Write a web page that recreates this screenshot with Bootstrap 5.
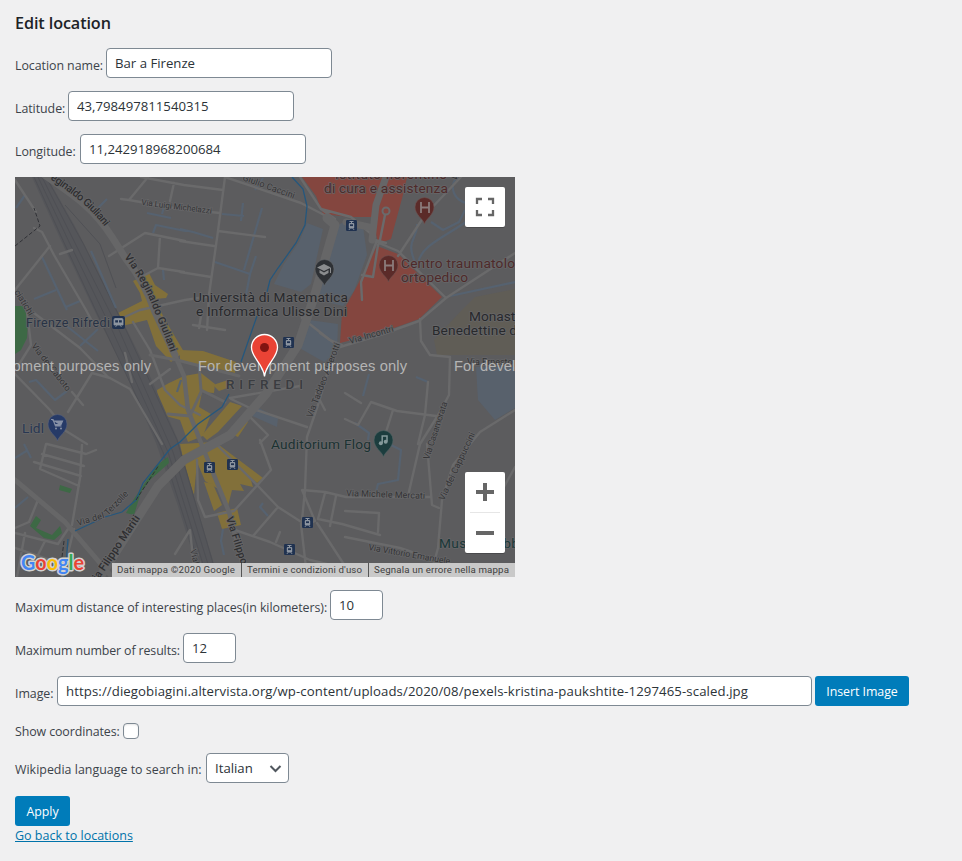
<!DOCTYPE html>
<html lang="en">
<head>
<meta charset="utf-8">
<meta name="viewport" content="width=device-width, initial-scale=1">
<title>Edit location</title>
<link href="https://cdn.jsdelivr.net/npm/bootstrap@5.3.0/dist/css/bootstrap.min.css" rel="stylesheet">
<style>
body{background:#f0f0f1;color:#3c434a;font-family:"Open Sans","Noto Sans",sans-serif;font-size:12.4px;line-height:19px}
.page{padding:13px 15px 0}
h1.title{font-size:16.2px;font-weight:600;line-height:20px;color:#1d2327;margin:0 0 15px;letter-spacing:-.1px}
.field{height:30px;margin-bottom:13px}
.field label{white-space:nowrap;padding-top:8px;flex:none;letter-spacing:-.05px}
.field .form-control,.field .form-select{height:30px;flex:none;padding:0 8px;font-size:13.2px;line-height:28px;color:#2c3338;border:1px solid #7e8993;border-radius:4px;background-color:#fff}
.l-name{width:91px}.l-lat{width:53px}.l-lon{width:65px}.l-dist{width:315px}.l-res{width:168px}.l-img{width:42px}.l-show{width:108px}.l-lang{width:191px}
.field .wide{width:226px}.field .num{width:53px}.field .url{width:755px;letter-spacing:.095px}
.field .l-res{letter-spacing:-.12px}.field .l-lang{letter-spacing:.02px;padding-top:7px}
.field .form-select{width:83px;padding-right:24px;background-image:none}
.select-box svg{position:absolute;right:7px;top:8px;pointer-events:none}
.field.check{height:22px;margin-bottom:12px}
.field.check label{padding-top:2px;letter-spacing:-.1px}
.field .form-check-input{width:16px;height:16px;margin:2px 0 0;border:1px solid #7e8993;border-radius:4px;box-shadow:inset 0 1px 2px rgba(0,0,0,.1)}
.btn-wp{height:30px;padding:1px 0 0;font-size:12.4px;font-weight:500;line-height:30px;border-radius:3px;border:0;background:#007cba;color:#fff;white-space:nowrap;letter-spacing:-.05px}
.btn-wp:hover{background:#0071a1;color:#fff}
.insert{width:94px;margin-left:3px}
.apply{width:55px}
.back{color:#0073aa;font-size:12.5px}
.map{width:500px;height:400px;margin-bottom:13px;display:block}
.map text{font-family:Roboto,"Liberation Sans",sans-serif}
.map .notice text{font-family:"Liberation Sans",Arial,sans-serif}
.map .brand{font-family:Lato,sans-serif;paint-order:stroke}
.road{fill:none;stroke:#6a6a6b;stroke-linejoin:round;stroke-linecap:round;stroke-width:2.4}
.water{fill:none;stroke:#566270;stroke-width:2.2;stroke-linejoin:round}
.halo{paint-order:stroke;stroke:#666668;stroke-width:1.6px;stroke-linejoin:round}
.street{font-size:9px;fill:#343436}
</style>
</head>
<body>
<main class="page">
<h1 class="title">Edit location</h1>
<form>
<div class="field d-flex"><label class="l-name" for="name">Location name:</label><input id="name" class="form-control wide" value="Bar a Firenze"></div>
<div class="field d-flex"><label class="l-lat" for="lat">Latitude:</label><input id="lat" class="form-control wide" value="43,798497811540315"></div>
<div class="field d-flex"><label class="l-lon" for="lon">Longitude:</label><input id="lon" class="form-control wide" value="11,242918968200684"></div>

<svg class="map" viewBox="15 177 500 400" role="img" aria-label="Map">
<defs>
<g id="tram"><rect x="-5.5" y="-5.5" width="11" height="11" rx="1.2" fill="#203250"/><path d="M-2-4H2M0-4V-2" stroke="#8d95a0" stroke-width="1"/><rect x="-2.7" y="-2.6" width="5.4" height="5.6" rx="1" fill="#8d95a0"/><path d="M-1.5-1.2H1.5V.6H-1.5Z" fill="#203250"/><path d="M-2.6 4.4-1.4 3M2.6 4.4 1.4 3" stroke="#8d95a0"/></g>
<path id="drop" d="M0 17C-1 12-9.5 8-9.5 0A9.5 9.5 0 0 1 9.5 0C9.5 8 1 12 0 17Z"/>
<path id="giuliani" d="M50 179C80 199 94 211 112 237"/>
<path id="giuliani2" d="M124 257C137 274 147 291 154 310S165 336 172 356"/>
</defs>
<rect x="15" y="177" width="500" height="400" fill="#5c5c5e"/>
<!-- areas -->
<g fill="#58616c">
<path d="M307 223 323 229 311 284 301 292 274 284 284 264 299 242Z"/>
<path d="M334 227 346 221 363 226 367 255 354 291 343 306 318 300Z"/>
<path d="M302 319 338 324 337 352 324 362 296 346Z"/>
<path d="M476 367H515V408L495 420 478 400Z"/>
<path d="M253 405 278 418 277 427 250 415Z"/>
</g>
<path d="M475 297 515 289V355H437L434 340 460 312Z" fill="#605d56"/>
<g fill="#84463f">
<path d="M302 177H407L404 191 391 239 378 244 373 217 350 217 323 214 316 196Z"/>
<path d="M377 246 398 254 442 297 419 319 380 333 340 343 342 313 357 286Z"/>
</g>
<g fill="#3d6945">
<path d="M15 306H23L28 318 27 338 21 350 15 354Z"/>
<path d="M60 485 72 489 70 493 59 490Z"/>
<path d="M30 526 36 516 41 520 36 528 52 535 60 526 62 533 54 540 44 538Z"/>
</g>
<g fill="#82703a">
<path d="M133 281 149 273 155 285 168 294 166 298 155 299 164 318 184 352 171 362 156 346 147 320 122 326 118 313 142 301 140 293Z"/>
<path d="M180 350 203 351 236 362 235 373 214 368 197 365 180 360Z"/>
<path d="M157 390 169 383 184 376 201 373 215 384 214 393 202 392 199 407 211 414 203 436 188 442 180 420 166 416 158 402Z"/>
<path d="M213 385 231 379 233 386 219 391ZM202 435 230 402 242 406 218 432 207 440ZM180 444 215 442 263 478 257 483 250 477 253 487 240 484 244 491 232 490 228 506 220 490 205 481 197 462 194 495 185 468Z"/>
<path d="M204 482 213 484 222 505 214 511ZM217 513 237 508 241 525 222 529ZM234 435 246 419 248 422 238 437Z"/>
</g>
<!-- railway -->
<path d="M32 177H47L77 230 116 308 149 374 178 440 201 521 218 577H200L178 506 156 443 126 374 98 318 64 247Z" fill="#55565a"/>
<g fill="none" stroke="#4d4e53" stroke-width=".8"><path d="M34 177 66 247 105 330 163 452 203 577M38 177 71 246 112 330 168 452 207 577M42 177 77 247 119 330 173 452 212 577M46 177 84 245 126 330 177 440 217 577M65 205 100 244 116 288"/></g>
<!-- minor water -->
<g class="water">
<path d="M98 208 107 199M147 213 171 218M164 207 162 214M153 233 156 225 185 231M16 208 25 195M42 257 67 310M56 290 34 299M66 307 80 301M91 251 116 308M164 280 163 270M180 229 193 232 213 238M222 214 244 216M243 203 241 221M262 208 244 270M215 262 250 274 256 256M250 274 246 295M457 177C448 188 455 200 466 203M431 222 443 230 459 222 465 210M418 263C421 246 444 237 466 222M450 296 515 282M417 224C418 239 405 240 415 262M59 320 98 351M80 346 98 329M29 382 36 380 55 400 67 391M416 377 428 382M363 396 369 374M355 423 369 433 368 440M389 444 401 450 398 480 378 484 376 492M268 516 260 507 263 503M223 529 221 541 224 555M263 178 255 190M177 392 181 380M15 508 28 497M15 458 28 450M24 444 31 458"/>
</g>
<!-- streets -->
<g class="road">
<path d="M121 199 129 200 148 177M129 200 180 209 220 213M174 183 170 201M141 177 184 185 223 190M225 177 218 231 209 295 207 330M109 256 145 233 185 241M160 236 158 268 184 272M158 268 143 276M180 241 214 246M218 231 265 237M180 272 211 277M15 180 36 212M34 228 42 232 54 255 86 310 94 325M50 246 15 290M60 254 72 250"/>
<path d="M34 313 80 348 108 377 130 389 162 444M27 312 31 345 18 366M15 374 50 410 66 431 87 444M68 412 92 373 110 378M72 392 83 405M125 353 132 382M118 320 140 310 185 300 212 296M133 322 150 350 165 390 180 405 200 415M150 384 170 369"/>
<path d="M300 177 321 209 335 219M225 177 301 203 328 217M321 209 351 217 375 237M461 177 425 215 398 256M374 241 398 251 446 298 515 253M376 243 361 282 362 300M386 210 380 240M375 240 386 243M362 275 373 277 378 245M446 298 419 321 380 335 340 347 320 333"/>
<path d="M420 319 421 341 430 355 450 357 449 395 440 412 420 444 408 496M428 382 425 415 418 444M345 393 361 403M345 419 358 425 371 402 397 411 436 416M393 410 386 432M515 410 480 432 453 465 442 500 438 548 430 577M302 318 330 340 342 345M334 350 318 405 307 437 305 490 302 520M231 399 250 408 307 427M193 325 225 330M202 310 199 328M247 414 268 435 260 443M230 398 300 386M316 393 325 410"/>
<path d="M46 444 40 469 79 486M82 445 80 478 72 525M34 462 81 476M42 454 84 466M47 444 86 454 96 450M15 533 58 544 68 529M38 500 29 522 15 528M74 529 62 577M15 548 50 560M25 533 17 577M45 541 38 555"/>
<path d="M260 440 271 470 234 511 205 517 198 500 197 460M218 446 258 486 278 507 306 525 315 521 302 490 325 492 346 497 430 497M278 507 253 536M235 530 270 542 310 560 360 572M276 542 280 532M325 493 318 519 342 524 380 535M336 496 330 526M345 511 379 513 378 532M345 537 400 548 450 565 515 572M427 444 432 505 439 508M465 550 480 530 515 467M301 524 306 568M317 523 345 566M175 554 190 530 195 577"/>
</g>
<g fill="none" stroke="#666667" stroke-linejoin="round" stroke-linecap="round">
<path d="M386 177 376 205 372 240M346 222 373 228" stroke-width="7"/>
<path d="M327 218 335 225 315 294 298 345 266 394 230 435 184 460 158 486 138 517 100 577" stroke-width="9"/>
<path d="M40 172C78 198 94 209 112 237L126 259C139 275 148 292 155 312L175 355" stroke-width="7"/>
<path d="M175 355 184 376 188 410 207 458 229 512 246 577" stroke-width="4.500"/>
<path d="M15 480 65 522 112 577" stroke-width="5"/>
<path d="M150 355 177 360 239 376M199 365 201 390 225 402M168 414 190 416 201 392" stroke-width="3"/>
</g>
<!-- park along the river -->
<path d="M126 513 134 499 157 465 168 457 169 463 151 479 141 492 134 515Z" fill="#3d6945"/>
<circle cx="386" cy="211" r="3.500" fill="#84463f" stroke="#6a6a6b" stroke-width="2"/>
<path d="M292 177 303 189 307 206 305 225 296 243 278 268 270 280 267 292M257 316 241 362M229 394 222 407 198 424 180 442 170 449 143 483 136 500 122 512 105 517 75 531M68 539 65 577" fill="none" stroke="#25577d" stroke-width="1.300"/>
<path d="M15 246 40 226 34 208M136 500 159 465M64 541 61 565" fill="none" stroke="#303136" stroke-width="1" stroke-dasharray="4 2"/>

<!-- street names -->
<g class="halo">
<text font-size="10.800" font-weight="500" fill="#2f2f31"><textPath href="#giuliani" textLength="73">eginaldo Giuliani</textPath></text>
<text font-size="10.600" font-weight="500" fill="#2f2f31"><textPath href="#giuliani2" textLength="107">Via Reginaldo Giuliani</textPath></text>
<g class="street">
<text transform="translate(141 205) rotate(7)" font-size="8.400" textLength="71">Via Luigi Michelazzi</text>
<text transform="translate(242 180) rotate(20)" textLength="55">Giulio Caccini</text>
<text transform="translate(14 292) rotate(58)">ciatichi</text>
<text transform="translate(31 346) rotate(52)" textLength="58">Via del Caboto</text>
<text transform="translate(350 344) rotate(-16)" textLength="46">Via Incontri</text>
<text transform="translate(312 418) rotate(-69)" textLength="79">Via Taddeo Alderotti</text>
<text transform="translate(467 365)">Via Ernesto</text>
<text transform="translate(429 460) rotate(-72)" textLength="60">Via Casamorata</text>
<text transform="translate(444 501) rotate(-65)" textLength="74">Via dei Cappuccini</text>
<text transform="translate(455 181) rotate(-48)">Via</text>
<text transform="translate(346 496) rotate(2)" textLength="79">Via Michele Mercati</text>
<text transform="translate(368 550) rotate(10)" textLength="83">Via Vittorio Emanuele</text>
<text transform="translate(78 526) rotate(-17)" textLength="28">Via del</text>
<text transform="translate(108 516) rotate(-46)" textLength="30">Terzolle</text>
<text transform="translate(190 550) rotate(75)">Viale</text>
</g>
<text transform="translate(94 587) rotate(-56)" font-size="11" font-weight="500" fill="#2f2f31" textLength="83">Via Filippo Mariti</text>
<text transform="translate(226 518) rotate(72)" font-size="10.500" font-weight="500" fill="#2f2f31">Via Filippo</text>
</g>
<!-- place names -->
<g class="halo" font-size="13.700">
<g fill="#4e2a2a"><text x="335" y="179" textLength="112">Istituto fiorentino</text><text x="324" y="193" textLength="124">di cura e assistenza</text><text x="401" y="268" textLength="114">Centro traumatolo</text><text x="401" y="282" textLength="67">ortopedico</text></g>
<g fill="#28292c"><text x="193" y="302" textLength="155">Università di Matematica</text><text x="196" y="316" textLength="151">e Informatica Ulisse Dini</text><text x="469" y="321">Monast</text><text x="432" y="335" textLength="85">Benedettine d</text></g>
<text x="26" y="327" textLength="84" font-size="12.500" fill="#283345">Firenze Rifredi</text>
<text x="22" y="433" textLength="22" fill="#283752">Lidl</text>
<text x="271" y="449" textLength="100" fill="#1b3232">Auditorium Flog</text>
<text x="439" y="548" fill="#1b3838" textLength="80">Museo Stibb</text>
<text x="226" y="389" textLength="77" font-size="13.500" font-weight="500" fill="#3a3c40">RIFREDI</text>
</g>
<!-- place markers -->
<use href="#tram" x="351.500" y="225.500"/><use href="#tram" x="288.500" y="342.500"/><use href="#tram" x="209.500" y="467.500"/><use href="#tram" x="232.500" y="464.500"/><use href="#tram" x="307.500" y="522.500"/><use href="#tram" x="289.500" y="549.500"/>
<rect x="112" y="316" width="13" height="13" rx="2" fill="#203250"/><path d="M115 318.500H122Q123 318.500 123 320V325H114V320Q114 318.500 115 318.500ZM115.500 327 117 325M121.500 327 120 325" fill="#8d95a0" stroke="#8d95a0" stroke-width=".8"/><path d="M115.200 320.200H118V322.400H115.200ZM119 320.200H121.800V322.400H119Z" fill="#203250"/>
<g fill="#5b2b29" stroke="#6e5250" stroke-width=".6"><use href="#drop" x="424.500" y="207"/><use href="#drop" x="388.500" y="265"/></g>
<path d="M421 202V213M429 202V213M421 207.500H429M385 260V271M393 260V271M385 265.500H393" stroke="#8b7b7b" stroke-width="1.800" fill="none"/>
<use href="#drop" x="324.500" y="269" fill="#2e3135" stroke="#65686b" stroke-width=".6"/><path d="M317 267.500 324 264 331 267.500 324 271ZM319.500 270V273L324 275.500 328.500 273V270L324 272.500ZM330 268V273H331V268Z" fill="#8a8c8e"/>
<use href="#drop" x="57.500" y="424" fill="#263a67" stroke="#59617a" stroke-width=".6"/><path d="M51 419.500H53L55.500 426H61.500M54 421H62.500L61 424.500H55" fill="#8690a6" stroke="#8690a6" stroke-width="1.200"/><circle cx="56" cy="428.500" r="1" fill="#8690a6"/><circle cx="61" cy="428.500" r="1" fill="#8690a6"/>
<use href="#drop" x="383.500" y="440" fill="#1c3d3e" stroke="#506465" stroke-width=".6"/><path d="M382.200 443V436H387V441.500" fill="none" stroke="#83999a" stroke-width="1.500"/><circle cx="380.800" cy="443.300" r="2" fill="#83999a"/><circle cx="385.700" cy="441.700" r="2" fill="#83999a"/>
<!-- notice overlay -->
<g class="notice" fill="#b4b4b4" font-size="14.700"><text x="-58" y="371" textLength="209">For development purposes only</text><text x="198" y="371" textLength="209">For development purposes only</text><text x="454" y="371">For devel</text></g>
<!-- location marker -->
<path d="M264.500 376.500C263.500 364 251.500 358 251.500 347.500A13 13 0 0 1 277.500 347.500C277.500 358 265.500 364 264.500 376.500Z" fill="#ea4335" stroke="#fff" stroke-width="1.300"/><circle cx="264.500" cy="347.500" r="4.500" fill="#811411"/>
<!-- controls -->
<rect x="465" y="188" width="40" height="40" rx="2" fill="#000" opacity=".2"/><rect x="465" y="187" width="40" height="40" rx="2" fill="#fff"/>
<path d="M477 204V199H482M488 199H493V204M493 210V215H488M482 215H477V210" fill="none" stroke="#666" stroke-width="2.300"/>
<rect x="465" y="473" width="40" height="81" rx="2" fill="#000" opacity=".2"/><rect x="465" y="472" width="40" height="81" rx="2" fill="#fff"/>
<path d="M470 512.500H500" stroke="#e6e6e6"/><path d="M476 492H494M485 483V501M476 533H494" stroke="#666" stroke-width="4"/>
<!-- attribution -->
<rect x="112" y="563" width="403" height="14" fill="#c9c9c9"/><path d="M241.500 563V577M368.500 563V577" stroke="#555"/>
<g font-size="9.700" fill="#404040"><text x="117" y="573" textLength="118">Dati mappa ©2020 Google</text><text x="247" y="573" textLength="115">Termini e condizioni d'uso</text><text x="374" y="573" textLength="135">Segnala un errore nella mappa</text></g>
<text class="brand" x="21" y="570" font-size="20" font-weight="700" textLength="63" lengthAdjust="spacingAndGlyphs" stroke="#d2d2d2" stroke-width="3" stroke-linejoin="round"><tspan fill="#4285f4">G</tspan><tspan fill="#ea4335">o</tspan><tspan fill="#fbbc05">o</tspan><tspan fill="#4285f4">g</tspan><tspan fill="#34a853">l</tspan><tspan fill="#ea4335">e</tspan></text>
</svg>

<div class="field d-flex"><label class="l-dist" for="dist">Maximum distance of interesting places(in kilometers):</label><input id="dist" class="form-control num" value="10"></div>
<div class="field d-flex"><label class="l-res" for="res">Maximum number of results:</label><input id="res" class="form-control num" value="12"></div>
<div class="field d-flex"><label class="l-img" for="img">Image:</label><input id="img" class="form-control url" value="https://diegobiagini.altervista.org/wp-content/uploads/2020/08/pexels-kristina-paukshtite-1297465-scaled.jpg"><button type="button" class="btn btn-wp insert">Insert Image</button></div>
<div class="field check d-flex align-items-center"><label class="l-show" for="show">Show coordinates:</label><input id="show" type="checkbox" class="form-check-input"></div>
<div class="field d-flex"><label class="l-lang" for="lang">Wikipedia language to search in:</label><div class="select-box position-relative"><select id="lang" class="form-select"><option>Italian</option></select><svg width="13" height="14" viewBox="0 0 13 14" fill="none" stroke="#50575e" stroke-width="2"><path d="M1.500 5 6.500 10 11.500 5"/></svg></div></div>
<button type="button" class="btn btn-wp apply d-block">Apply</button>
<a class="back" href="#">Go back to locations</a>
</form>
</main>
<script src="https://cdn.jsdelivr.net/npm/bootstrap@5.3.0/dist/js/bootstrap.bundle.min.js"></script>
</body>
</html>
